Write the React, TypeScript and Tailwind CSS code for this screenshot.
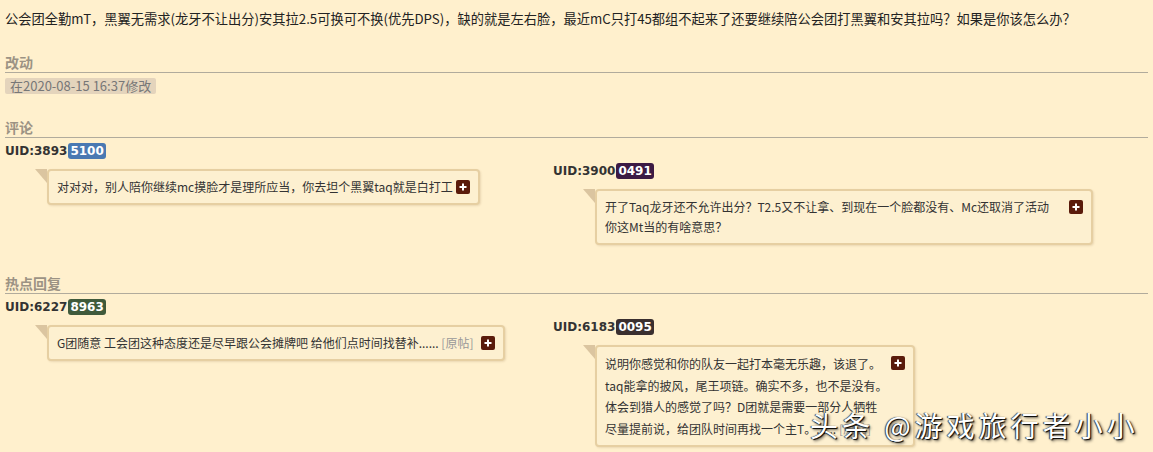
import type { ReactNode } from "react";

const cjk = "font-['Noto_Sans_CJK_SC',sans-serif]";

function PlusIcon() {
  return (
    <svg width="14" height="14" viewBox="0 0 14 14" className="block">
      <rect width="14" height="14" rx="2" fill="#5a1b0b" />
      <path d="M7 3.5v7M3.5 7h7" stroke="#fff" strokeWidth="2" />
    </svg>
  );
}

function SectionTitle({ title }: { title: string }) {
  return (
    <div className="border-b border-[#b1ab9c] text-[14px] font-bold leading-[20px] text-[#9c9384]">
      {title}
    </div>
  );
}

function Uid({ base, tail, color }: { base: string; tail: string; color: string }) {
  return (
    <div className="flex font-['DejaVu_Sans',sans-serif] text-[12px] font-bold leading-[16px] text-[#333]">
      <span>UID:{base}</span>
      <span className={`ml-[1px] block rounded-[3px] px-[2px] text-white ${color}`}>{tail}</span>
    </div>
  );
}

function Bubble({ children, gap, leading }: { children: ReactNode; gap: string; leading: string }) {
  return (
    <div className="ml-[42px] mt-[10px] flex">
      <div className="relative rounded-[4px] border-2 border-[#e6cfa2] bg-[#fdf0d0] px-[8px] py-[6px] shadow-[1px_1px_2px_rgba(120,90,40,0.15)]">
        <span className="absolute left-[-14px] top-[-2px] h-0 w-0 border-l-[12px] border-t-[14px] border-l-transparent border-t-[#dbc5a0]" />
        <div className={`flex items-start ${gap}`}>
          <div className={`text-[12px] text-[#333] ${leading}`}>{children}</div>
          <span className="mt-[3px] block shrink-0">
            <PlusIcon />
          </span>
        </div>
      </div>
    </div>
  );
}

function Comment({
  base,
  tail,
  color,
  gap,
  offset,
  leading = "leading-[20px]",
  children,
}: {
  base: string;
  tail: string;
  color: string;
  gap: string;
  offset?: boolean;
  leading?: string;
  children: ReactNode;
}) {
  return (
    <div className={offset ? "pt-[20px]" : ""}>
      <Uid base={base} tail={tail} color={color} />
      <Bubble gap={gap} leading={leading}>
        {children}
      </Bubble>
    </div>
  );
}

export default function App() {
  return (
    <div className={`relative min-h-[452px] w-full overflow-hidden bg-[#fff0cd] px-[5px] pb-[6px] ${cjk}`}>
      <p className="pt-[9px] text-[13.25px] leading-[20px] text-[#222]">
        公会团全勤mT，黑翼无需求(龙牙不让出分)安其拉2.5可换可不换(优先DPS)，缺的就是左右脸，最近mC只打45都组不起来了还要继续陪公会团打黑翼和安其拉吗？如果是你该怎么办？
      </p>

      <div className="mt-[23px]">
        <SectionTitle title="改动" />
      </div>
      <div className="mt-[5px] flex">
        <span className="block rounded-[2px] bg-[#e4d4bc] px-[5px] text-[13px] leading-[16px] text-[#777]">
          在2020-08-15 16:37修改
        </span>
      </div>

      <div className="mt-[23px]">
        <SectionTitle title="评论" />
      </div>
      <div className="mt-[5px] grid grid-cols-[548px_1fr]">
        <Comment base="3893" tail="5100" color="bg-[#4a79b2]" gap="gap-[3px]">
          对对对，别人陪你继续mc摸脸才是理所应当，你去坦个黑翼taq就是白打工
        </Comment>
        <Comment base="3900" tail="0491" color="bg-[#3c1a44]" gap="gap-[20px]" offset>
          开了Taq龙牙还不允许出分？T2.5又不让拿、到现在一个脸都没有、Mc还取消了活动
          <br />
          你这Mt当的有啥意思？
        </Comment>
      </div>

      <div className="mt-[28px]">
        <SectionTitle title="热点回复" />
      </div>
      <div className="mt-[5px] grid grid-cols-[548px_1fr]">
        <Comment base="6227" tail="8963" color="bg-[#3f5a3b]" gap="gap-[8px]">
          G团随意 工会团这种态度还是尽早跟公会摊牌吧 给他们点时间找替补...... <span className="text-[#999]">[原帖]</span>
        </Comment>
        <Comment
          base="6183"
          tail="0095"
          color="bg-[#3a2f2f]"
          gap="gap-[4px]"
          offset
          leading="leading-[21.5px]"
        >
          说明你感觉和你的队友一起打本毫无乐趣，该退了。
          <br />
          taq能拿的披风，尾王项链。确实不多，也不是没有。
          <br />
          体会到猎人的感觉了吗？D团就是需要一部分人牺牲
          <br />
          尽量提前说，给团队时间再找一个主T。...... <span className="text-[#999]">[原帖]</span>
        </Comment>
      </div>

      <div className="absolute bottom-[11px] left-[810px] whitespace-nowrap text-[28px] leading-[34px] tracking-[4px] text-white [text-shadow:1px_1px_1px_#000,-1px_0_1px_#333,2px_2px_3px_rgba(0,0,0,0.6)]">
        头条 @游戏旅行者小小
      </div>
    </div>
  );
}
